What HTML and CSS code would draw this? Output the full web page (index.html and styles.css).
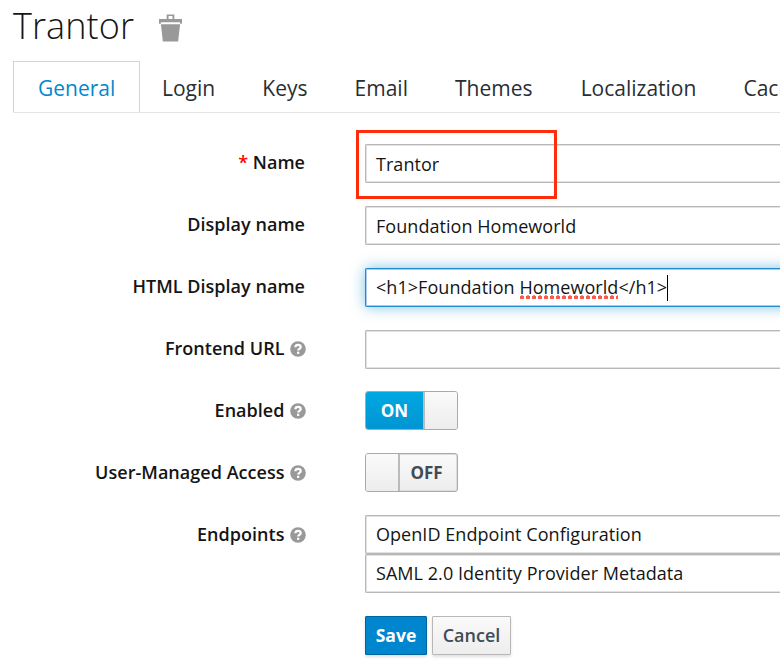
FILE: index.html
```html
<!DOCTYPE html>
<html lang="en">
<head>
<meta charset="utf-8">
<title>Trantor</title>
<link rel="stylesheet" href="styles.css">
</head>
<body>
<svg class="defs" aria-hidden="true">
  <symbol id="help" viewBox="0 0 16 16">
    <circle cx="8" cy="8" r="7.8" fill="#999"/>
    <path d="M5.400 6.200C5.500 4.600 6.500 3.900 8 3.900c1.500 0 2.700.8 2.700 2.200 0 1.900-2.500 1.700-2.500 3.500" fill="none" stroke="#fff" stroke-width="2.300"/>
    <rect x="7" y="10.700" width="2.300" height="2.200" fill="#fff"/>
  </symbol>
</svg>
<header class="heading">
  <h1>Trantor</h1>
  <svg class="trash" viewBox="0 0 24 28"><path d="M0 4.500h8V0h8v4.500h8v5h-2V8H2v1.500H0zM10 1.500v3h4v-3zM2 10h20l-2 18H4z" fill="#999" fill-rule="evenodd"/></svg>
</header>
<nav class="tabs">
  <a class="tab active">General</a>
  <a class="tab">Login</a>
  <a class="tab">Keys</a>
  <a class="tab">Email</a>
  <a class="tab">Themes</a>
  <a class="tab">Localization</a>
  <a class="tab">Cache</a>
</nav>
<form class="form">
  <div class="row"><label><span class="required">*</span> Name</label><div class="field">Trantor<div class="highlight"></div></div></div>
  <div class="row"><label>Display name</label><div class="field">Foundation Homeworld</div></div>
  <div class="row"><label>HTML Display name</label><div class="field focused">&lt;h1&gt;Foundation <span class="misspelled">Homeworld</span>&lt;/h1&gt;<i class="caret"></i></div></div>
  <div class="row"><label>Frontend URL<svg class="help"><use href="#help"/></svg></label><div class="field"></div></div>
  <div class="row"><label>Enabled<svg class="help"><use href="#help"/></svg></label><div class="switch on"><b>ON</b><i></i></div></div>
  <div class="row"><label>User-Managed Access<svg class="help"><use href="#help"/></svg></label><div class="switch off"><i></i><b>OFF</b></div></div>
  <div class="row endpoints"><label>Endpoints<svg class="help"><use href="#help"/></svg></label>
    <div class="stack"><div class="field">OpenID Endpoint Configuration</div><div class="field">SAML 2.0 Identity Provider Metadata</div></div></div>
  <div class="actions"><button type="button" class="save">Save</button><button type="button" class="cancel">Cancel</button></div>
</form>
</body>
</html>
```
FILE: styles.css
```css
* { box-sizing: border-box; }
body { margin: 0; width: 780px; height: 670px; overflow: hidden; background: #fff; color: #151515; font-family: "Open Sans", sans-serif; }
.defs { display: block; width: 0; height: 0; }
.heading { display: flex; align-items: flex-start; height: 61px; padding: 0 0 0 13px; }
h1 { margin: 2px 0 0; width: 146px; font-size: 36px; font-weight: 300; line-height: 48px; letter-spacing: .1px; }
.trash { width: 23px; height: 28px; margin-top: 14px; }
.tabs { display: flex; height: 52px; margin-left: 13px; border-bottom: 1px solid #e4e4e4; overflow: hidden; }
.tab { flex: none; height: 52px; padding: 1px 24px 0 23px; font-size: 21px; line-height: 52px; color: #292e34; white-space: nowrap; }
.tab + .tab { margin-right: .1px; }
.tab.active { width: 127px; margin-right: -1px; padding: 0 23px 0 24px; background: #fff; border: 1px solid #d4d4d4; border-bottom: 0; color: #0088ce; }
.tab:nth-child(n + 6) { position: relative; left: 1px; }
.form { padding-top: 31px; }
.row { display: flex; height: 62px; }
label { flex: none; width: 305px; margin-right: 60px; line-height: 37px; text-align: right; font-size: 18px; font-weight: 600; letter-spacing: .03px; white-space: nowrap; }
.required { color: #f00; }
.help { width: 16px; height: 16px; margin-left: 5px; margin-right: -.5px; vertical-align: -2px; }
.field { position: relative; flex: none; width: 415px; height: 39px; padding-left: 10px; border: 1px solid #b8b8b8; border-right: 0; border-radius: 2px 0 0 2px; box-shadow: inset 1px 0 #e2e2e2, inset 0 1px #e2e2e2, inset 0 -1px #e2e2e2; font-size: 18px; line-height: 38px; letter-spacing: .05px; white-space: pre; }
.focused { width: 430px; border-color: #2089d0; line-height: 37px; box-shadow: inset 0 0 0 1px #a9cdec, 0 0 14px rgba(0,136,206,.5); }
.misspelled { padding-bottom: 1px; background: radial-gradient(circle, #f65b50 1.900px, transparent 2.400px) 0 100% / 6px 5px repeat-x; background-clip: content-box; background-origin: padding-box; padding-right: 3px; margin-right: -3px; }
.caret { display: inline-block; width: 1px; height: 26px; background: #000; vertical-align: -7px; }
.highlight { position: absolute; left: -10px; top: -15px; width: 201px; height: 69px; border: 3px solid #ff2d0b; }
.switch { display: flex; width: 93px; height: 39px; border: 1px solid #aaa; margin-top: -1px; border-radius: 3px; box-shadow: inset 0 0 0 1px #ddd; background: linear-gradient(#fafafa,#ededed); font-size: 17px; line-height: 38px; text-align: center; overflow: hidden; }
.switch b { flex: 1; color: #414b56; }
.switch i { width: 34px; background: linear-gradient(#fafafa,#ededed); }
.on b { color: #fff; background: linear-gradient(#00a8e1,#0095d3); }
.on i { border-left: 2px solid #bbb; }
.off i { border-right: 2px solid #bbb; }
.off b { padding-right: 4px; }
.endpoints { height: 101px; }
.stack { margin-top: -1px; }
.stack .field { line-height: 36px; }
.actions { display: flex; gap: 5px; margin: -1px 0 0 365px; }
button { height: 39px; padding: 0 0 1px; border-radius: 1px; font: 600 18px/34px "Open Sans", sans-serif; box-shadow: 0 2px 3px rgba(0,0,0,.12); }
.save { width: 62px; color: #fff; font-weight: 700; font-size: 17.500px; background: #0085cf; border: 1px solid #00659c; }
.cancel { width: 79px; color: #414b56; background: linear-gradient(#fafafa,#ededed); border: 1px solid #b7b7b7; }
```
